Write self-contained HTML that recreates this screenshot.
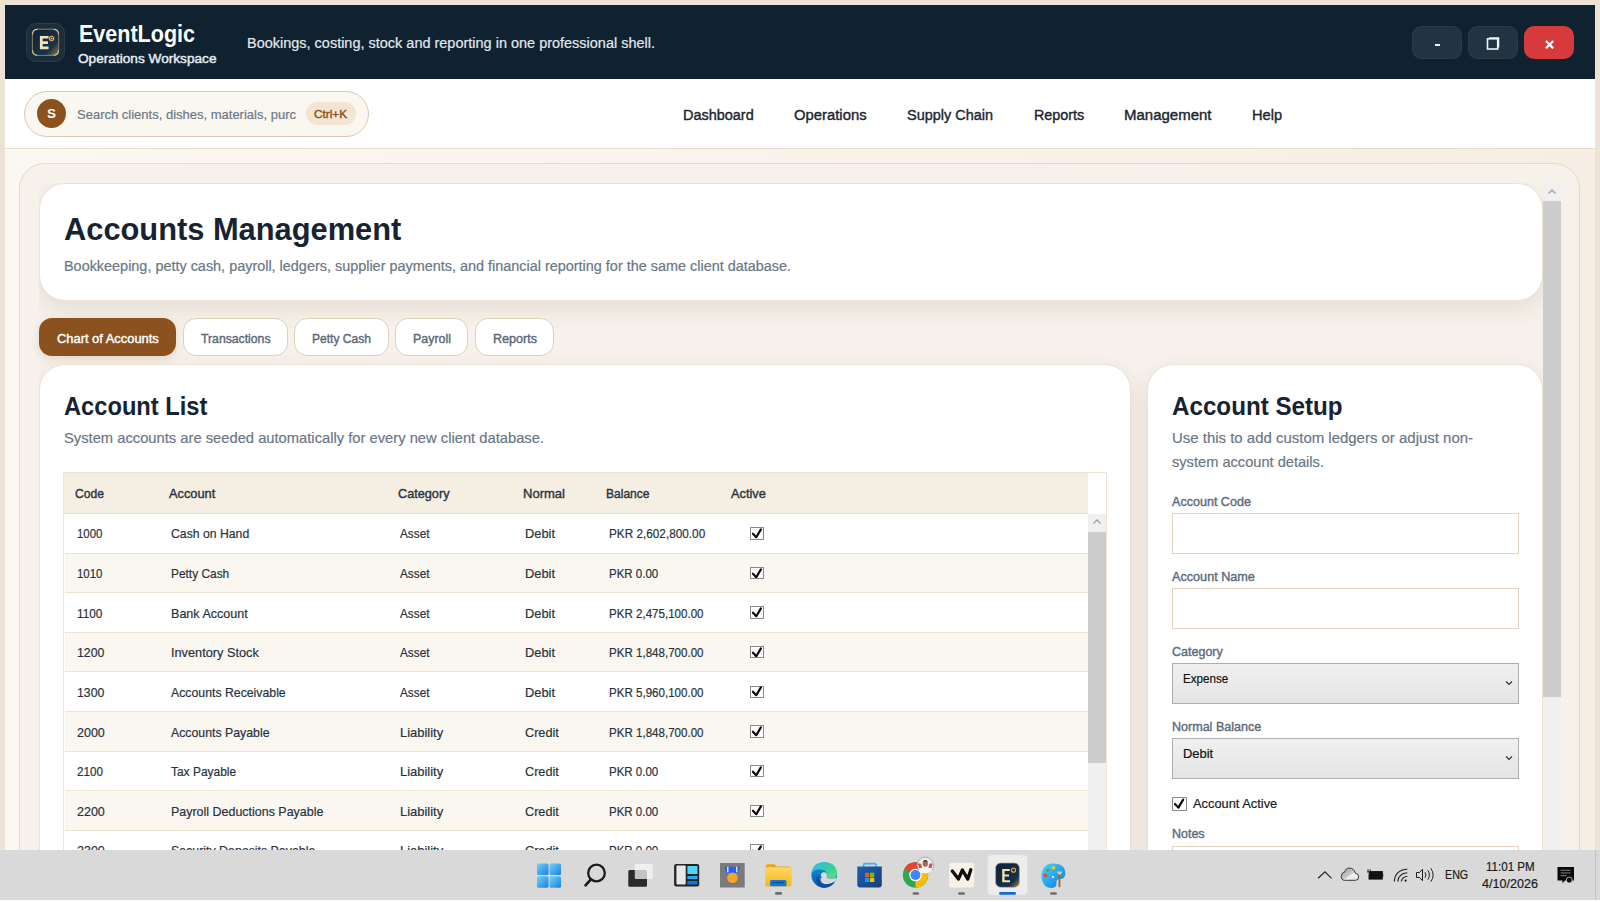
<!DOCTYPE html>
<html><head><meta charset="utf-8"><style>
html,body{margin:0;padding:0;width:1600px;height:902px;overflow:hidden;background:#ece3d6;font-family:'Liberation Sans', sans-serif}
.t{position:absolute;white-space:nowrap;line-height:1;transform-origin:0 0}
</style></head><body>
<div style="position:absolute;left:5px;top:5px;width:1590px;height:74px;background:#10222f"></div>
<div style="position:absolute;left:26px;top:23px;width:37px;height:37px;border-radius:10px;background:#1c2e3c;border:1px solid #2b3c4a"></div>
<svg style="position:absolute;left:31px;top:28px" width="29" height="29" viewBox="0 0 29 29">
<defs><linearGradient id="lg" x1="0" y1="0" x2="1" y2="1"><stop offset="0" stop-color="#0f2134"/><stop offset="0.72" stop-color="#17324c"/><stop offset="1" stop-color="#9c7f48"/></linearGradient></defs>
<rect x="1.4" y="1.2" width="26.3" height="26.2" rx="5" fill="url(#lg)" stroke="#8f7e5e" stroke-width="1"/>
<path d="M1.6 6.5Q1.6 1.4 6.5 1.4M22.6 1.4Q27.5 1.4 27.5 6.5M27.5 22.2Q27.5 27.2 22.6 27.2M6.5 27.2Q1.6 27.2 1.6 22.2" fill="none" stroke="#d9c28e" stroke-width="1.1"/>
<path d="M8.9 7.9H17.6V10.5H11.7V13.2H17V16H11.7V18.5H17.6V21.15H8.9Z" fill="#f4e3b0"/>
<circle cx="20.6" cy="10.4" r="2.1" fill="#1d3550" stroke="#e3a43a" stroke-width="1.3"/>
<circle cx="20.6" cy="10.4" r="0.6" fill="#dfe8f5"/>
</svg>
<div class=t style="left:78.50px;top:22.10px;font-size:24px;font-weight:700;color:#ffffff;transform:scaleX(0.8967);">EventLogic</div>
<div class=t style="left:78.00px;top:53.17px;font-size:12.5px;font-weight:400;color:#e8eef5;-webkit-text-stroke:0.4px #e8eef5;transform:scaleX(1.0912);">Operations Workspace</div>
<div class=t style="left:246.60px;top:35.43px;font-size:15.5px;font-weight:400;color:#e3e9ef;-webkit-text-stroke:0.2px #e3e9ef;transform:scaleX(0.9340);">Bookings, costing, stock and reporting in one professional shell.</div>
<div style="position:absolute;left:1412px;top:26px;width:48px;height:31px;border-radius:9px;background:#223442;border:1px solid #2b3c49"></div>
<div style="position:absolute;left:1434.5px;top:44.2px;width:5.3px;height:1.8px;background:#f2f5f8"></div>
<div style="position:absolute;left:1468px;top:26px;width:48px;height:31px;border-radius:9px;background:#223442;border:1px solid #2b3c49"></div>
<svg style="position:absolute;left:1485px;top:36px" width="16" height="15" viewBox="0 0 16 15"><rect x="2.5" y="2.8" width="10.2" height="10.2" fill="none" stroke="#f2f5f8" stroke-width="1.6"/><path d="M4 1.9H13.6V11.6" fill="none" stroke="#f2f5f8" stroke-width="1.3"/></svg>
<div style="position:absolute;left:1524px;top:26px;width:50px;height:33px;border-radius:10px;background:#d63a3a"></div>
<svg style="position:absolute;left:1544px;top:39px" width="11" height="11" viewBox="0 0 11 11"><path d="M2 2L9.2 9.2M9.2 2L2 9.2" stroke="#fff" stroke-width="2.3" stroke-linecap="butt"/></svg>
<div style="position:absolute;left:5px;top:79px;width:1590px;height:69px;background:#ffffff;border-bottom:1px solid #ebe0d0"></div>
<div style="position:absolute;left:23.5px;top:91px;width:343.5px;height:44px;border-radius:23px;background:#faf6f0;border:1px solid #dac8b1"></div>
<div style="position:absolute;left:37px;top:99px;width:29px;height:29px;border-radius:50%;background:#8b521f"></div>
<div class=t style="left:46.50px;top:107.45px;font-size:13px;font-weight:700;color:#ffffff;transform:scaleX(1.0378);">S</div>
<div class=t style="left:77.00px;top:108.15px;font-size:13px;font-weight:400;color:#6b7a8b;-webkit-text-stroke:0.2px #6b7a8b;transform:scaleX(1.0003);">Search clients, dishes, materials, purc</div>
<div style="position:absolute;left:306px;top:102px;width:50px;height:23px;border-radius:12px;background:#f3e5d3"></div>
<div class=t style="left:314.20px;top:108.62px;font-size:11.5px;font-weight:400;color:#8b5220;-webkit-text-stroke:0.4px #8b5220;transform:scaleX(1.0223);">Ctrl+K</div>
<div class=t style="left:682.80px;top:107.12px;font-size:15.5px;font-weight:400;color:#1c2630;-webkit-text-stroke:0.4px #1c2630;transform:scaleX(0.9324);">Dashboard</div>
<div class=t style="left:793.70px;top:107.12px;font-size:15.5px;font-weight:400;color:#1c2630;-webkit-text-stroke:0.4px #1c2630;transform:scaleX(0.9574);">Operations</div>
<div class=t style="left:906.70px;top:107.12px;font-size:15.5px;font-weight:400;color:#1c2630;-webkit-text-stroke:0.4px #1c2630;transform:scaleX(0.9327);">Supply Chain</div>
<div class=t style="left:1033.60px;top:107.12px;font-size:15.5px;font-weight:400;color:#1c2630;-webkit-text-stroke:0.4px #1c2630;transform:scaleX(0.9267);">Reports</div>
<div class=t style="left:1124.10px;top:107.12px;font-size:15.5px;font-weight:400;color:#1c2630;-webkit-text-stroke:0.4px #1c2630;transform:scaleX(0.9670);">Management</div>
<div class=t style="left:1251.90px;top:107.12px;font-size:15.5px;font-weight:400;color:#1c2630;-webkit-text-stroke:0.4px #1c2630;transform:scaleX(0.9439);">Help</div>
<div style="position:absolute;left:5px;top:149px;width:1590px;height:710px;background:linear-gradient(90deg,#fbf7f1,#f9f4ed 40%,#f6eee4)"></div>
<div style="position:absolute;left:19px;top:163px;width:1559px;height:740px;border-radius:26px;background:#f6f1ea;border:1px solid #e6d9c6"></div>
<div style="position:absolute;left:39px;top:183px;width:1504px;height:667px;overflow:hidden"><div style="position:absolute;left:0;top:0;width:1504px;height:118px;border-radius:26px;background:#fff;box-shadow:0 8px 22px rgba(70,50,20,0.10);border:1px solid #ede2d3;box-sizing:border-box;"></div><div style="position:absolute;left:0;top:181px;width:1092px;height:700px;border-radius:26px;background:#fff;box-shadow:0 8px 22px rgba(70,50,20,0.10);border:1px solid #ede2d3;box-sizing:border-box;"></div><div style="position:absolute;left:1108px;top:181px;width:396px;height:700px;border-radius:26px;background:#fff;box-shadow:0 8px 22px rgba(70,50,20,0.10);border:1px solid #ede2d3;box-sizing:border-box;"></div></div>
<div class=t style="left:63.75px;top:213.62px;font-size:31.5px;font-weight:700;color:#172330;transform:scaleX(0.9782);">Accounts Management</div>
<div class=t style="left:64.40px;top:258.50px;font-size:14px;font-weight:400;color:#6b7785;-webkit-text-stroke:0.2px #6b7785;transform:scaleX(1.0300);">Bookkeeping, petty cash, payroll, ledgers, supplier payments, and financial reporting for the same client database.</div>
<div style="position:absolute;left:39px;top:318px;width:137px;height:38px;border-radius:13px;background:#8b521f;box-shadow:0 3px 8px rgba(139,82,31,0.15)"></div>
<div class=t style="left:56.60px;top:332.25px;font-size:13px;font-weight:400;color:#ffffff;-webkit-text-stroke:0.4px #ffffff;transform:scaleX(0.9920);">Chart of Accounts</div>
<div style="position:absolute;left:182.5px;top:318px;width:103.00px;height:36px;border-radius:13px;background:#fff;border:1px solid #dfcfb9"></div>
<div class=t style="left:200.50px;top:332.25px;font-size:13px;font-weight:400;color:#5a6878;-webkit-text-stroke:0.4px #5a6878;transform:scaleX(0.9400);">Transactions</div>
<div style="position:absolute;left:294px;top:318px;width:92.75px;height:36px;border-radius:13px;background:#fff;border:1px solid #dfcfb9"></div>
<div class=t style="left:312.00px;top:332.25px;font-size:13px;font-weight:400;color:#5a6878;-webkit-text-stroke:0.4px #5a6878;transform:scaleX(0.9278);">Petty Cash</div>
<div style="position:absolute;left:395px;top:318px;width:71.00px;height:36px;border-radius:13px;background:#fff;border:1px solid #dfcfb9"></div>
<div class=t style="left:413.00px;top:332.25px;font-size:13px;font-weight:400;color:#5a6878;-webkit-text-stroke:0.4px #5a6878;transform:scaleX(0.9560);">Payroll</div>
<div style="position:absolute;left:475px;top:318px;width:76.75px;height:36px;border-radius:13px;background:#fff;border:1px solid #dfcfb9"></div>
<div class=t style="left:493.00px;top:332.25px;font-size:13px;font-weight:400;color:#5a6878;-webkit-text-stroke:0.4px #5a6878;transform:scaleX(0.9664);">Reports</div>
<div class=t style="left:63.50px;top:394.22px;font-size:25.5px;font-weight:700;color:#172330;transform:scaleX(0.9286);">Account List</div>
<div class=t style="left:63.50px;top:430.25px;font-size:15px;font-weight:400;color:#6b7785;-webkit-text-stroke:0.2px #6b7785;transform:scaleX(0.9824);">System accounts are seeded automatically for every new client database.</div>
<div style="position:absolute;left:63px;top:472px;width:1042px;height:400px;border:1px solid #ede2d3;background:#fff"></div>
<div style="position:absolute;left:64px;top:473px;width:1024px;height:40px;background:#f5eee3;border-bottom:1px solid #e9dac6"></div>
<div class=t style="left:74.75px;top:486.95px;font-size:13px;font-weight:400;color:#2a3542;-webkit-text-stroke:0.4px #2a3542;transform:scaleX(0.9331);">Code</div>
<div class=t style="left:168.75px;top:486.95px;font-size:13px;font-weight:400;color:#2a3542;-webkit-text-stroke:0.4px #2a3542;transform:scaleX(0.9844);">Account</div>
<div class=t style="left:397.50px;top:486.95px;font-size:13px;font-weight:400;color:#2a3542;-webkit-text-stroke:0.4px #2a3542;transform:scaleX(0.9763);">Category</div>
<div class=t style="left:523.00px;top:486.95px;font-size:13px;font-weight:400;color:#2a3542;-webkit-text-stroke:0.4px #2a3542;transform:scaleX(1.0022);">Normal</div>
<div class=t style="left:606.00px;top:486.95px;font-size:13px;font-weight:400;color:#2a3542;-webkit-text-stroke:0.4px #2a3542;transform:scaleX(0.9258);">Balance</div>
<div class=t style="left:731.00px;top:486.95px;font-size:13px;font-weight:400;color:#2a3542;-webkit-text-stroke:0.4px #2a3542;transform:scaleX(0.9815);">Active</div>
<div style="position:absolute;left:64.5px;top:514.00px;width:1023.5px;height:38.62px;background:#ffffff;border-bottom:1px solid #efe3d2"></div>
<div class=t style="left:76.90px;top:527.41px;font-size:13.4px;font-weight:400;color:#28323d;-webkit-text-stroke:0.2px #28323d;transform:scaleX(0.8524);">1000</div>
<div class=t style="left:170.90px;top:527.41px;font-size:13.4px;font-weight:400;color:#28323d;-webkit-text-stroke:0.2px #28323d;transform:scaleX(0.9135);">Cash on Hand</div>
<div class=t style="left:400.20px;top:527.41px;font-size:13.4px;font-weight:400;color:#28323d;-webkit-text-stroke:0.2px #28323d;transform:scaleX(0.8806);">Asset</div>
<div class=t style="left:524.80px;top:527.41px;font-size:13.4px;font-weight:400;color:#28323d;-webkit-text-stroke:0.2px #28323d;transform:scaleX(0.9595);">Debit</div>
<div class=t style="left:608.60px;top:527.41px;font-size:13.4px;font-weight:400;color:#28323d;-webkit-text-stroke:0.2px #28323d;transform:scaleX(0.8789);">PKR 2,602,800.00</div>
<div style="position:absolute;left:750.2px;top:527.20px;width:11.6px;height:10.4px;border:1px solid #8a8a8a;background:#fff"></div>
<svg style="position:absolute;left:750px;top:527.00px" width="14" height="14" viewBox="0 0 14 14"><path d="M2.9 6.7L6.3 10.2L10.9 2.4" fill="none" stroke="#0a0a0a" stroke-width="2.2" stroke-linecap="round" stroke-linejoin="round"/></svg>
<div style="position:absolute;left:64.5px;top:553.62px;width:1023.5px;height:38.62px;background:#faf7f1;border-bottom:1px solid #efe3d2"></div>
<div class=t style="left:76.90px;top:567.03px;font-size:13.4px;font-weight:400;color:#28323d;-webkit-text-stroke:0.2px #28323d;transform:scaleX(0.8524);">1010</div>
<div class=t style="left:170.90px;top:567.03px;font-size:13.4px;font-weight:400;color:#28323d;-webkit-text-stroke:0.2px #28323d;transform:scaleX(0.8885);">Petty Cash</div>
<div class=t style="left:400.20px;top:567.03px;font-size:13.4px;font-weight:400;color:#28323d;-webkit-text-stroke:0.2px #28323d;transform:scaleX(0.8806);">Asset</div>
<div class=t style="left:524.80px;top:567.03px;font-size:13.4px;font-weight:400;color:#28323d;-webkit-text-stroke:0.2px #28323d;transform:scaleX(0.9595);">Debit</div>
<div class=t style="left:608.60px;top:567.03px;font-size:13.4px;font-weight:400;color:#28323d;-webkit-text-stroke:0.2px #28323d;transform:scaleX(0.8582);">PKR 0.00</div>
<div style="position:absolute;left:750.2px;top:566.82px;width:11.6px;height:10.4px;border:1px solid #8a8a8a;background:#fff"></div>
<svg style="position:absolute;left:750px;top:566.62px" width="14" height="14" viewBox="0 0 14 14"><path d="M2.9 6.7L6.3 10.2L10.9 2.4" fill="none" stroke="#0a0a0a" stroke-width="2.2" stroke-linecap="round" stroke-linejoin="round"/></svg>
<div style="position:absolute;left:64.5px;top:593.24px;width:1023.5px;height:38.62px;background:#ffffff;border-bottom:1px solid #efe3d2"></div>
<div class=t style="left:76.90px;top:606.65px;font-size:13.4px;font-weight:400;color:#28323d;-webkit-text-stroke:0.2px #28323d;transform:scaleX(0.8820);">1100</div>
<div class=t style="left:170.90px;top:606.65px;font-size:13.4px;font-weight:400;color:#28323d;-webkit-text-stroke:0.2px #28323d;transform:scaleX(0.9378);">Bank Account</div>
<div class=t style="left:400.20px;top:606.65px;font-size:13.4px;font-weight:400;color:#28323d;-webkit-text-stroke:0.2px #28323d;transform:scaleX(0.8806);">Asset</div>
<div class=t style="left:524.80px;top:606.65px;font-size:13.4px;font-weight:400;color:#28323d;-webkit-text-stroke:0.2px #28323d;transform:scaleX(0.9595);">Debit</div>
<div class=t style="left:608.60px;top:606.65px;font-size:13.4px;font-weight:400;color:#28323d;-webkit-text-stroke:0.2px #28323d;transform:scaleX(0.8634);">PKR 2,475,100.00</div>
<div style="position:absolute;left:750.2px;top:606.44px;width:11.6px;height:10.4px;border:1px solid #8a8a8a;background:#fff"></div>
<svg style="position:absolute;left:750px;top:606.24px" width="14" height="14" viewBox="0 0 14 14"><path d="M2.9 6.7L6.3 10.2L10.9 2.4" fill="none" stroke="#0a0a0a" stroke-width="2.2" stroke-linecap="round" stroke-linejoin="round"/></svg>
<div style="position:absolute;left:64.5px;top:632.86px;width:1023.5px;height:38.62px;background:#faf7f1;border-bottom:1px solid #efe3d2"></div>
<div class=t style="left:76.90px;top:646.27px;font-size:13.4px;font-weight:400;color:#28323d;-webkit-text-stroke:0.2px #28323d;transform:scaleX(0.9162);">1200</div>
<div class=t style="left:170.90px;top:646.27px;font-size:13.4px;font-weight:400;color:#28323d;-webkit-text-stroke:0.2px #28323d;transform:scaleX(0.9513);">Inventory Stock</div>
<div class=t style="left:400.20px;top:646.27px;font-size:13.4px;font-weight:400;color:#28323d;-webkit-text-stroke:0.2px #28323d;transform:scaleX(0.8806);">Asset</div>
<div class=t style="left:524.80px;top:646.27px;font-size:13.4px;font-weight:400;color:#28323d;-webkit-text-stroke:0.2px #28323d;transform:scaleX(0.9595);">Debit</div>
<div class=t style="left:608.60px;top:646.27px;font-size:13.4px;font-weight:400;color:#28323d;-webkit-text-stroke:0.2px #28323d;transform:scaleX(0.8634);">PKR 1,848,700.00</div>
<div style="position:absolute;left:750.2px;top:646.06px;width:11.6px;height:10.4px;border:1px solid #8a8a8a;background:#fff"></div>
<svg style="position:absolute;left:750px;top:645.86px" width="14" height="14" viewBox="0 0 14 14"><path d="M2.9 6.7L6.3 10.2L10.9 2.4" fill="none" stroke="#0a0a0a" stroke-width="2.2" stroke-linecap="round" stroke-linejoin="round"/></svg>
<div style="position:absolute;left:64.5px;top:672.48px;width:1023.5px;height:38.62px;background:#ffffff;border-bottom:1px solid #efe3d2"></div>
<div class=t style="left:76.90px;top:685.89px;font-size:13.4px;font-weight:400;color:#28323d;-webkit-text-stroke:0.2px #28323d;transform:scaleX(0.9162);">1300</div>
<div class=t style="left:170.90px;top:685.89px;font-size:13.4px;font-weight:400;color:#28323d;-webkit-text-stroke:0.2px #28323d;transform:scaleX(0.9173);">Accounts Receivable</div>
<div class=t style="left:400.20px;top:685.89px;font-size:13.4px;font-weight:400;color:#28323d;-webkit-text-stroke:0.2px #28323d;transform:scaleX(0.8806);">Asset</div>
<div class=t style="left:524.80px;top:685.89px;font-size:13.4px;font-weight:400;color:#28323d;-webkit-text-stroke:0.2px #28323d;transform:scaleX(0.9595);">Debit</div>
<div class=t style="left:608.60px;top:685.89px;font-size:13.4px;font-weight:400;color:#28323d;-webkit-text-stroke:0.2px #28323d;transform:scaleX(0.8634);">PKR 5,960,100.00</div>
<div style="position:absolute;left:750.2px;top:685.68px;width:11.6px;height:10.4px;border:1px solid #8a8a8a;background:#fff"></div>
<svg style="position:absolute;left:750px;top:685.48px" width="14" height="14" viewBox="0 0 14 14"><path d="M2.9 6.7L6.3 10.2L10.9 2.4" fill="none" stroke="#0a0a0a" stroke-width="2.2" stroke-linecap="round" stroke-linejoin="round"/></svg>
<div style="position:absolute;left:64.5px;top:712.10px;width:1023.5px;height:38.62px;background:#faf7f1;border-bottom:1px solid #efe3d2"></div>
<div class=t style="left:76.90px;top:725.51px;font-size:13.4px;font-weight:400;color:#28323d;-webkit-text-stroke:0.2px #28323d;transform:scaleX(0.9330);">2000</div>
<div class=t style="left:170.90px;top:725.51px;font-size:13.4px;font-weight:400;color:#28323d;-webkit-text-stroke:0.2px #28323d;transform:scaleX(0.9188);">Accounts Payable</div>
<div class=t style="left:400.20px;top:725.51px;font-size:13.4px;font-weight:400;color:#28323d;-webkit-text-stroke:0.2px #28323d;transform:scaleX(0.9671);">Liability</div>
<div class=t style="left:524.80px;top:725.51px;font-size:13.4px;font-weight:400;color:#28323d;-webkit-text-stroke:0.2px #28323d;transform:scaleX(0.9445);">Credit</div>
<div class=t style="left:608.60px;top:725.51px;font-size:13.4px;font-weight:400;color:#28323d;-webkit-text-stroke:0.2px #28323d;transform:scaleX(0.8634);">PKR 1,848,700.00</div>
<div style="position:absolute;left:750.2px;top:725.30px;width:11.6px;height:10.4px;border:1px solid #8a8a8a;background:#fff"></div>
<svg style="position:absolute;left:750px;top:725.10px" width="14" height="14" viewBox="0 0 14 14"><path d="M2.9 6.7L6.3 10.2L10.9 2.4" fill="none" stroke="#0a0a0a" stroke-width="2.2" stroke-linecap="round" stroke-linejoin="round"/></svg>
<div style="position:absolute;left:64.5px;top:751.72px;width:1023.5px;height:38.62px;background:#ffffff;border-bottom:1px solid #efe3d2"></div>
<div class=t style="left:76.90px;top:765.13px;font-size:13.4px;font-weight:400;color:#28323d;-webkit-text-stroke:0.2px #28323d;transform:scaleX(0.8692);">2100</div>
<div class=t style="left:170.90px;top:765.13px;font-size:13.4px;font-weight:400;color:#28323d;-webkit-text-stroke:0.2px #28323d;transform:scaleX(0.8924);">Tax Payable</div>
<div class=t style="left:400.20px;top:765.13px;font-size:13.4px;font-weight:400;color:#28323d;-webkit-text-stroke:0.2px #28323d;transform:scaleX(0.9671);">Liability</div>
<div class=t style="left:524.80px;top:765.13px;font-size:13.4px;font-weight:400;color:#28323d;-webkit-text-stroke:0.2px #28323d;transform:scaleX(0.9445);">Credit</div>
<div class=t style="left:608.60px;top:765.13px;font-size:13.4px;font-weight:400;color:#28323d;-webkit-text-stroke:0.2px #28323d;transform:scaleX(0.8582);">PKR 0.00</div>
<div style="position:absolute;left:750.2px;top:764.92px;width:11.6px;height:10.4px;border:1px solid #8a8a8a;background:#fff"></div>
<svg style="position:absolute;left:750px;top:764.72px" width="14" height="14" viewBox="0 0 14 14"><path d="M2.9 6.7L6.3 10.2L10.9 2.4" fill="none" stroke="#0a0a0a" stroke-width="2.2" stroke-linecap="round" stroke-linejoin="round"/></svg>
<div style="position:absolute;left:64.5px;top:791.34px;width:1023.5px;height:38.62px;background:#faf7f1;border-bottom:1px solid #efe3d2"></div>
<div class=t style="left:76.90px;top:804.75px;font-size:13.4px;font-weight:400;color:#28323d;-webkit-text-stroke:0.2px #28323d;transform:scaleX(0.9330);">2200</div>
<div class=t style="left:170.90px;top:804.75px;font-size:13.4px;font-weight:400;color:#28323d;-webkit-text-stroke:0.2px #28323d;transform:scaleX(0.9306);">Payroll Deductions Payable</div>
<div class=t style="left:400.20px;top:804.75px;font-size:13.4px;font-weight:400;color:#28323d;-webkit-text-stroke:0.2px #28323d;transform:scaleX(0.9671);">Liability</div>
<div class=t style="left:524.80px;top:804.75px;font-size:13.4px;font-weight:400;color:#28323d;-webkit-text-stroke:0.2px #28323d;transform:scaleX(0.9445);">Credit</div>
<div class=t style="left:608.60px;top:804.75px;font-size:13.4px;font-weight:400;color:#28323d;-webkit-text-stroke:0.2px #28323d;transform:scaleX(0.8582);">PKR 0.00</div>
<div style="position:absolute;left:750.2px;top:804.54px;width:11.6px;height:10.4px;border:1px solid #8a8a8a;background:#fff"></div>
<svg style="position:absolute;left:750px;top:804.34px" width="14" height="14" viewBox="0 0 14 14"><path d="M2.9 6.7L6.3 10.2L10.9 2.4" fill="none" stroke="#0a0a0a" stroke-width="2.2" stroke-linecap="round" stroke-linejoin="round"/></svg>
<div style="position:absolute;left:64.5px;top:830.96px;width:1023.5px;height:38.62px;background:#ffffff;border-bottom:1px solid #efe3d2"></div>
<div class=t style="left:76.90px;top:844.37px;font-size:13.4px;font-weight:400;color:#28323d;-webkit-text-stroke:0.2px #28323d;transform:scaleX(0.9330);">2300</div>
<div class=t style="left:170.90px;top:844.37px;font-size:13.4px;font-weight:400;color:#28323d;-webkit-text-stroke:0.2px #28323d;transform:scaleX(0.9232);">Security Deposits Payable</div>
<div class=t style="left:400.20px;top:844.37px;font-size:13.4px;font-weight:400;color:#28323d;-webkit-text-stroke:0.2px #28323d;transform:scaleX(0.9671);">Liability</div>
<div class=t style="left:524.80px;top:844.37px;font-size:13.4px;font-weight:400;color:#28323d;-webkit-text-stroke:0.2px #28323d;transform:scaleX(0.9445);">Credit</div>
<div class=t style="left:608.60px;top:844.37px;font-size:13.4px;font-weight:400;color:#28323d;-webkit-text-stroke:0.2px #28323d;transform:scaleX(0.8582);">PKR 0.00</div>
<div style="position:absolute;left:750.2px;top:844.16px;width:11.6px;height:10.4px;border:1px solid #8a8a8a;background:#fff"></div>
<svg style="position:absolute;left:750px;top:843.96px" width="14" height="14" viewBox="0 0 14 14"><path d="M2.9 6.7L6.3 10.2L10.9 2.4" fill="none" stroke="#0a0a0a" stroke-width="2.2" stroke-linecap="round" stroke-linejoin="round"/></svg>
<div style="position:absolute;left:1088px;top:513.5px;width:18px;height:340px;background:#f0f0f0"></div>
<div style="position:absolute;left:1088px;top:532px;width:18px;height:231.3px;background:#cdcdcd"></div>
<svg style="position:absolute;left:1092px;top:518px" width="10" height="8" viewBox="0 0 10 8"><path d="M1.5 5.5L5 2L8.5 5.5" fill="none" stroke="#a0a0a0" stroke-width="1.3"/></svg>
<div class=t style="left:1171.90px;top:394.22px;font-size:25.5px;font-weight:700;color:#172330;transform:scaleX(0.9482);">Account Setup</div>
<div class=t style="left:1172.00px;top:430.35px;font-size:15px;font-weight:400;color:#6b7785;-webkit-text-stroke:0.2px #6b7785;transform:scaleX(0.9973);">Use this to add custom ledgers or adjust non-</div>
<div class=t style="left:1172.00px;top:453.55px;font-size:15px;font-weight:400;color:#6b7785;-webkit-text-stroke:0.2px #6b7785;transform:scaleX(0.9749);">system account details.</div>
<div class=t style="left:1172.00px;top:494.95px;font-size:13px;font-weight:400;color:#5d6b7b;-webkit-text-stroke:0.4px #5d6b7b;transform:scaleX(0.9661);">Account Code</div>
<div style="position:absolute;left:1171.5px;top:513.4px;width:345px;height:39px;border:1px solid #e3d3bd;background:#fff"></div>
<div class=t style="left:1172.00px;top:569.95px;font-size:13px;font-weight:400;color:#5d6b7b;-webkit-text-stroke:0.4px #5d6b7b;transform:scaleX(0.9723);">Account Name</div>
<div style="position:absolute;left:1171.5px;top:588.4px;width:345px;height:39px;border:1px solid #e3d3bd;background:#fff"></div>
<div class=t style="left:1172.00px;top:644.75px;font-size:13px;font-weight:400;color:#5d6b7b;-webkit-text-stroke:0.4px #5d6b7b;transform:scaleX(0.9630);">Category</div>
<div style="position:absolute;left:1171.5px;top:663.4px;width:345px;height:39px;border:1px solid #adadad;background:linear-gradient(#f0f0f0,#e4e4e4)"></div>
<div class=t style="left:1182.50px;top:672.48px;font-size:13.2px;font-weight:400;color:#111111;-webkit-text-stroke:0.2px #111111;transform:scaleX(0.8826);">Expense</div>
<svg style="position:absolute;left:1505px;top:680.4px" width="8" height="6" viewBox="0 0 8 6"><path d="M1 1.5L4 4.5L7 1.5" fill="none" stroke="#333" stroke-width="1.2"/></svg>
<div class=t style="left:1172.00px;top:719.95px;font-size:13px;font-weight:400;color:#5d6b7b;-webkit-text-stroke:0.4px #5d6b7b;transform:scaleX(0.9643);">Normal Balance</div>
<div style="position:absolute;left:1171.5px;top:738.4px;width:345px;height:39px;border:1px solid #adadad;background:linear-gradient(#f0f0f0,#e4e4e4)"></div>
<div class=t style="left:1182.50px;top:747.48px;font-size:13.2px;font-weight:400;color:#111111;-webkit-text-stroke:0.2px #111111;transform:scaleX(0.9806);">Debit</div>
<svg style="position:absolute;left:1505px;top:755.4px" width="8" height="6" viewBox="0 0 8 6"><path d="M1 1.5L4 4.5L7 1.5" fill="none" stroke="#333" stroke-width="1.2"/></svg>
<div style="position:absolute;left:1172.4px;top:797.3px;width:12.2px;height:11.3px;border:1px solid #8a8a8a;background:#fff"></div>
<svg style="position:absolute;left:1172.4px;top:797px" width="14" height="14" viewBox="0 0 14 14"><path d="M3 7L6.4 10.6L11.2 2.6" fill="none" stroke="#0a0a0a" stroke-width="2.2" stroke-linecap="round" stroke-linejoin="round"/></svg>
<div class=t style="left:1192.80px;top:797.35px;font-size:13px;font-weight:400;color:#1b1b1b;-webkit-text-stroke:0.2px #1b1b1b;transform:scaleX(0.9873);">Account Active</div>
<div class=t style="left:1172.00px;top:827.05px;font-size:13px;font-weight:400;color:#5d6b7b;-webkit-text-stroke:0.4px #5d6b7b;transform:scaleX(0.9597);">Notes</div>
<div style="position:absolute;left:1171.5px;top:845.5px;width:345px;height:60px;border:1px solid #e3d3bd;background:#fff"></div>
<div style="position:absolute;left:1543px;top:184px;width:17.5px;height:670px;background:#f0f0f0"></div>
<div style="position:absolute;left:1543px;top:201px;width:17.5px;height:496px;background:#cdcdcd"></div>
<svg style="position:absolute;left:1547px;top:188px" width="10" height="8" viewBox="0 0 10 8"><path d="M1.5 5.5L5 2L8.5 5.5" fill="none" stroke="#a0a0a0" stroke-width="1.3"/></svg>
<div style="position:absolute;left:0;top:850px;width:1600px;height:50px;background:#d9d9d9"></div>
<div style="position:absolute;left:0;top:900px;width:1600px;height:2px;background:#fdfdfd"></div>
<svg style="position:absolute;left:0;top:850px" width="1600" height="50" viewBox="0 850 1600 50">
<defs>
<linearGradient id="win" x1="0" y1="0" x2="1" y2="1"><stop offset="0" stop-color="#70d2ff"/><stop offset="1" stop-color="#1a80db"/></linearGradient>
<linearGradient id="edge1" x1="0" y1="0" x2="1" y2="1"><stop offset="0" stop-color="#2fb9f0"/><stop offset="0.6" stop-color="#3ccf9a"/><stop offset="1" stop-color="#6be36a"/></linearGradient>
<linearGradient id="edge2" x1="0" y1="0" x2="0" y2="1"><stop offset="0" stop-color="#1a8fe0"/><stop offset="1" stop-color="#0c5bb0"/></linearGradient>
<linearGradient id="store" x1="0" y1="0" x2="1" y2="1"><stop offset="0" stop-color="#1d5fb0"/><stop offset="1" stop-color="#163f7c"/></linearGradient>
<linearGradient id="fold" x1="0" y1="0" x2="0" y2="1"><stop offset="0" stop-color="#ffd766"/><stop offset="1" stop-color="#f5b818"/></linearGradient>
<linearGradient id="paint" x1="0" y1="0" x2="1" y2="1"><stop offset="0" stop-color="#3fdcff"/><stop offset="1" stop-color="#1673dc"/></linearGradient>
<linearGradient id="el" x1="0" y1="0" x2="1" y2="1"><stop offset="0" stop-color="#0f2236"/><stop offset="0.75" stop-color="#16304a"/><stop offset="1" stop-color="#b08a4a"/></linearGradient>
<linearGradient id="cloud" x1="0" y1="0" x2="1" y2="1"><stop offset="0" stop-color="#9a9a9a"/><stop offset="0.55" stop-color="#cfcfcf"/><stop offset="0.56" stop-color="#f2f2f2"/><stop offset="1" stop-color="#e0e0e0"/></linearGradient>
</defs>
<!-- windows -->
<rect x="537" y="863.5" width="11.5" height="11.5" rx="1.5" fill="url(#win)"/>
<rect x="549.5" y="863.5" width="11.5" height="11.5" rx="1.5" fill="url(#win)"/>
<rect x="537" y="876.3" width="11.5" height="11.5" rx="1.5" fill="url(#win)"/>
<rect x="549.5" y="876.3" width="11.5" height="11.5" rx="1.5" fill="url(#win)"/>
<!-- search -->
<circle cx="596.5" cy="873" r="8.3" fill="none" stroke="#1b1b1b" stroke-width="2.3"/>
<path d="M590.8 879.5L585.5 885.3" stroke="#1b1b1b" stroke-width="2.6" stroke-linecap="round"/>
<!-- task view -->
<rect x="628.3" y="870" width="18.7" height="16.7" rx="1.5" fill="#2a2a2a"/>
<rect x="634.8" y="863.9" width="17.9" height="15.1" rx="1" fill="#f5f5f5" fill-opacity="0.75"/>
<!-- widgets -->
<rect x="674.1" y="863.9" width="25.1" height="22.7" rx="2" fill="#242424"/>
<rect x="676.4" y="865.5" width="9.3" height="19" rx="1" fill="#e8e8e8"/>
<rect x="687.4" y="866" width="10.1" height="8" fill="#4fd4fa"/>
<rect x="687.4" y="876" width="10.1" height="3" fill="#29a8ee"/>
<rect x="687.4" y="881" width="10.1" height="3.5" fill="#0f78d8"/>
<!-- medal -->
<rect x="720" y="863" width="24.7" height="24.5" fill="#7a7a7a"/>
<path d="M724.5 866.8H740L738 873.2H726.5Z" fill="#2a5ff2"/>
<rect x="727" y="866.8" width="1.5" height="5.5" fill="#d8e4ff"/>
<rect x="736" y="866.8" width="1.5" height="5.5" fill="#d8e4ff"/>
<circle cx="732.5" cy="877.8" r="5.3" fill="#f6a431"/>
<!-- folder -->
<path d="M765.8 866.3Q765.8 864.3 767.8 864.3H774.5L776.5 866.5H789.2Q791.2 866.5 791.2 868.5V886.2H765.8Z" fill="#e8a70e"/>
<rect x="765.8" y="867.3" width="25.4" height="18.9" rx="1" fill="url(#fold)"/>
<rect x="770" y="880" width="16.5" height="6.2" rx="1.5" fill="#1477d2"/>
<rect x="772.5" y="882" width="11.5" height="1.2" fill="#0b4f9a"/>
<rect x="775" y="892" width="7" height="2.7" rx="1.3" fill="#6e6e6e"/>
<!-- edge -->
<circle cx="824.2" cy="875" r="12.8" fill="url(#edge2)"/>
<path d="M811.6 873Q812.5 862.3 824.5 862.2Q836.8 862.4 836.9 873.5Q836.6 878.8 830.5 878.8Q826.2 878.6 826.2 876Q827.3 872.5 825 870.8Q821 868.3 816 869.8Q813 871 811.6 873Z" fill="url(#edge1)"/>
<path d="M826.2 876Q826.2 878.6 830.5 878.8Q834.5 878.9 836.6 877.3L835.6 881.6Q830 884.6 825 884.2Q820.5 883.5 820.6 878.5Q823 876.8 826.2 876Z" fill="#d9d9d9"/>
<path d="M818.8 875Q818 883.6 825.5 884.3Q831.3 884.6 834.8 881.3Q831.5 887.6 824 887.8Q817.5 887.6 816.2 881Q815.8 876.8 818.8 875Z" fill="#0d4f9e"/>
<circle cx="823.9" cy="875.2" r="2.9" fill="#dcdcdc"/>
<!-- store -->
<path d="M863.5 868V865Q863.5 863.6 865 863.6H874.5Q876 863.6 876 865V868" fill="none" stroke="#3ab3f2" stroke-width="1.6"/>
<path d="M857.3 866.5H881.8V884.5Q881.8 887.4 879 887.4H860.1Q857.3 887.4 857.3 884.5Z" fill="url(#store)"/>
<rect x="865" y="872.7" width="4.3" height="4.3" fill="#f25022"/>
<rect x="870" y="872.7" width="4.3" height="4.3" fill="#7fba00"/>
<rect x="865" y="877.7" width="4.3" height="4.3" fill="#00a4ef"/>
<rect x="870" y="877.7" width="4.3" height="4.3" fill="#ffb900"/>
<!-- chrome -->
<circle cx="915.5" cy="875" r="12.7" fill="#2da94f"/>
<path d="M915.5 875L904.5 868.7A12.7 12.7 0 0 1 926.5 868.7Z" fill="#e94235"/>
<path d="M915.5 875L926.5 868.7A12.7 12.7 0 0 1 915.5 887.7Z" fill="#fbbc04"/>
<circle cx="915.5" cy="875" r="6.3" fill="#fff"/>
<circle cx="915.5" cy="875" r="5" fill="#4285f4"/>
<circle cx="925.3" cy="865.3" r="8.2" fill="#f0eaea" stroke="#9a9a9a" stroke-width="0.8"/>
<path d="M919 869Q920 866.5 922 866H928.5Q930.5 866.5 931.5 869V871.5Q928 873.5 925 873.5Q921.5 873.5 919 871.5Z" fill="#f4f4f4"/>
<path d="M918 864Q920 862 921.5 865L922 868H919Z" fill="#d44a5a"/>
<path d="M932.5 864Q930.5 862 929 865L928.5 868H931.5Z" fill="#d44a5a"/>
<ellipse cx="925.3" cy="863.5" rx="2.6" ry="3.3" fill="#a06a50"/>
<path d="M922.7 861.5Q925.3 858.5 927.9 861.5Z" fill="#3b2a22"/>
<rect x="912.6" y="892.2" width="6.5" height="2.5" rx="1.2" fill="#6e6e6e"/>
<!-- W app -->
<rect x="949.1" y="862.7" width="25.1" height="24.9" rx="2.5" fill="#f8f1e6"/>
<path d="M952.3 871.1L958.4 879.1L962.4 870L967.8 879.1L970.8 869.8" fill="none" stroke="#0e0e0e" stroke-width="3.3" stroke-linejoin="round" stroke-linecap="round"/>
<rect x="958.1" y="892.2" width="6.8" height="2.5" rx="1.2" fill="#6e6e6e"/>
<!-- active eventlogic -->
<rect x="987.7" y="855" width="39.6" height="40" rx="4" fill="#ededed" stroke="#e2e2e2" stroke-width="0.6"/>
<rect x="995.6" y="863" width="23.8" height="24.3" rx="5" fill="url(#el)" stroke="#c9a96a" stroke-width="0.7"/>
<path d="M1002.2 869H1009.8V871H1004.6V874.6H1009V876.5H1004.6V880.2H1010V882.2H1002.2Z" fill="#f3e0ae"/>
<circle cx="1013.5" cy="870.2" r="2" fill="none" stroke="#e0a23a" stroke-width="1.2"/>
<rect x="999" y="892" width="17" height="2.8" rx="1.4" fill="#0a6fd8"/>
<!-- paint -->
<path d="M1053 863.5Q1065.5 863.5 1065.3 873.5Q1065 879 1060 879Q1056 879 1056.5 883Q1057 887.5 1052 888Q1043 888 1041.5 878Q1041 864 1053 863.5Z" fill="url(#paint)"/>
<circle cx="1045.5" cy="875.3" r="1.9" fill="#e84a2a"/>
<circle cx="1047.6" cy="870.3" r="1.7" fill="#3cb043"/>
<circle cx="1053.5" cy="867.7" r="1.8" fill="#ffc21a"/>
<circle cx="1053" cy="877" r="1.1" fill="#e8f4ff"/>
<rect x="1058.5" y="874" width="1.9" height="13.3" rx="0.8" fill="#a7672a"/>
<path d="M1056.9 871.5H1062.4L1061 874.6H1058.2Z" fill="#e2c48c"/>
<rect x="1050" y="892.2" width="6.9" height="2.5" rx="1.2" fill="#6e6e6e"/>
<!-- tray -->
<path d="M1318.1 878.3L1325 871.8L1331.5 878.3" fill="none" stroke="#222" stroke-width="1.2"/>
<path d="M1344.5 880.3H1355.5Q1358.7 880.3 1358.7 876.8Q1358.7 873.3 1355.3 873.3Q1354 868.1 1349.5 868.1Q1345.5 868.1 1344.6 872.2Q1341.3 872.5 1341.3 876.2Q1341.3 880.3 1344.5 880.3Z" fill="url(#cloud)" stroke="#3a3a3a" stroke-width="1"/>
<rect x="1369.3" y="871.5" width="13" height="7.6" fill="#111" stroke="#111" stroke-width="0.9"/>
<rect x="1382.3" y="873.5" width="0.9" height="3.5" fill="#111"/>
<path d="M1368 869.3V872M1370.2 869.3V872M1367.2 872H1371M1369.1 874V879.5" stroke="#111" stroke-width="0.9" fill="none"/>
<path d="M1394.3 881.5Q1395 870 1407.3 869.3M1397.8 881.5Q1398.5 873.5 1407.3 872.8M1401.3 881.5Q1402 877 1407.3 876.3" fill="none" stroke="#1e1e1e" stroke-width="1.1"/>
<circle cx="1405.6" cy="880.6" r="1.1" fill="#111"/>
<path d="M1416.5 872.5H1419.5L1422.5 869.3V880.7L1419.5 877.5H1416.5Z" fill="none" stroke="#1e1e1e" stroke-width="1"/>
<path d="M1425 872.3Q1427 875 1425 877.7M1427.8 870.3Q1431 875 1427.8 879.7M1430.8 868.3Q1435.5 875 1430.8 881.7" fill="none" stroke="#1e1e1e" stroke-width="1"/>
<path d="M1557.5 867H1574V880.5H1565L1562.5 883.3V880.5H1557.5Z" fill="#0a0a0a"/>
<rect x="1560.5" y="869.8" width="10" height="0.9" fill="#8a8a8a"/>
<rect x="1560.5" y="872.5" width="10" height="0.9" fill="#8a8a8a"/>
<rect x="1560.5" y="875.2" width="6" height="0.9" fill="#8a8a8a"/>
<circle cx="1569.3" cy="880" r="3" fill="#0a0a0a" stroke="#d0d0d0" stroke-width="0.8"/>
<rect x="1595.3" y="850" width="0.8" height="50" fill="#b8b8b8"/>
</svg>

<div class=t style="left:1444.80px;top:869.14px;font-size:12.3px;font-weight:400;color:#1a1a1a;-webkit-text-stroke:0.2px #1a1a1a;transform:scaleX(0.8703);">ENG</div>
<div class=t style="left:1485.80px;top:860.15px;font-size:13px;font-weight:400;color:#1a1a1a;-webkit-text-stroke:0.2px #1a1a1a;transform:scaleX(0.8905);">11:01 PM</div>
<div class=t style="left:1482.00px;top:877.15px;font-size:13px;font-weight:400;color:#1a1a1a;-webkit-text-stroke:0.2px #1a1a1a;transform:scaleX(0.9681);">4/10/2026</div>
</body></html>
